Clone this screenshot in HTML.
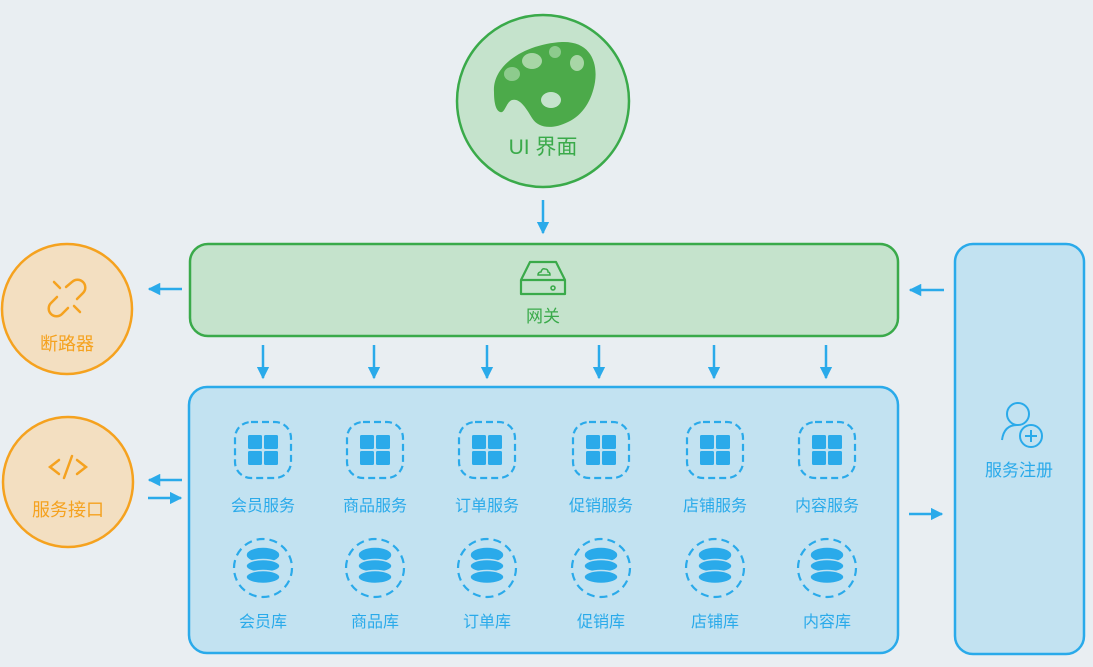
<!DOCTYPE html>
<html><head><meta charset="utf-8"><style>
body{margin:0;width:1093px;height:667px;background:#e9eef2;position:relative;overflow:hidden;font-family:"Liberation Sans","Noto Sans CJK SC",sans-serif}
.a{position:absolute}
.t{position:absolute;text-align:center;white-space:nowrap}
</style></head><body>
<svg class="a" style="left:0;top:0" width="1093" height="667">
<defs>
<marker id="ah" viewBox="0 0 10 10" refX="9" refY="5" markerWidth="5" markerHeight="5" orient="auto"><path d="M0 0L10 5L0 10z" fill="#2aaaea"/></marker>
</defs>
<circle cx="543" cy="101" r="86" fill="#c5e3cc" stroke="#3aaa4a" stroke-width="2.5"/>
<path d="M494 92 C492 65 525 44 562 42 C590 41 598 62 595 82 C592 100 583 115 568 122 C552 130 538 128 532 118 C526 108 520 98 512 100 C506 102 505 114 500 112 C495 110 494 100 494 92Z" fill="#4caa4a"/>
<ellipse cx="512" cy="74" rx="8" ry="7" fill="#8dcb8d"/>
<ellipse cx="532" cy="61" rx="10" ry="8" fill="#a8d6a6"/>
<ellipse cx="555" cy="52" rx="6" ry="6" fill="#8dcb8d"/>
<ellipse cx="577" cy="63" rx="7" ry="8" fill="#a8d6a6"/>
<ellipse cx="551" cy="100" rx="10" ry="8" fill="#c5e3cc"/>
<rect x="190" y="244" width="708" height="92" rx="18" fill="#c5e3cc" stroke="#3aaa4a" stroke-width="2.5"/>
<path d="M521 280 L530 262 L556 262 L565 280 Z M521 280 H565 V294 H521 Z" fill="none" stroke="#3aaa4a" stroke-width="2.2" stroke-linejoin="round"/>
<circle cx="553" cy="288" r="2" fill="none" stroke="#3aaa4a" stroke-width="1.6"/>
<path d="M538 275 q0-3 3-3 q1-4 4-3 q3 0 3 3 q2 0 2 3 z" fill="none" stroke="#3aaa4a" stroke-width="1.5"/>
<rect x="189" y="387" width="709" height="266" rx="18" fill="#c2e2f1" stroke="#2aaaea" stroke-width="2.5"/>
<rect x="955" y="244" width="129" height="410" rx="18" fill="#c2e2f1" stroke="#2aaaea" stroke-width="2.5"/>
<circle cx="1018" cy="414" r="11" fill="none" stroke="#2aaaea" stroke-width="2"/>
<path d="M1002 440 q2-15 15-15" fill="none" stroke="#2aaaea" stroke-width="2"/>
<circle cx="1031" cy="436" r="11" fill="none" stroke="#2aaaea" stroke-width="2"/>
<path d="M1031 430v12M1025 436h12" stroke="#2aaaea" stroke-width="2"/>
<circle cx="67" cy="309" r="65" fill="#f3dfc1" stroke="#f5a21f" stroke-width="2.5"/>
<circle cx="68" cy="482" r="65" fill="#f3dfc1" stroke="#f5a21f" stroke-width="2.5"/>
<g fill="none" stroke="#f5a21f" stroke-width="2.5" stroke-linecap="round">
<path d="M66 287 L72 282 A7 7 0 0 1 83 293 L77 299"/>
<path d="M68 308 L62 314 A7 7 0 0 1 51 303 L57 297"/>
<path d="M54 282 L60 288 M80 312 L74 306"/>
<path d="M59 460 L50 467 L59 474 M77 460 L86 467 L77 474 M72 456 L64 478"/>
</g>
<g stroke="#2aaaea" stroke-width="2.5" marker-end="url(#ah)">
<line x1="543" y1="200" x2="543" y2="233"/>
<line x1="182" y1="289" x2="149" y2="289"/>
<line x1="944" y1="290" x2="910" y2="290"/>
<line x1="182" y1="480" x2="149" y2="480"/>
<line x1="148" y1="498" x2="181" y2="498"/>
<line x1="909" y1="514" x2="942" y2="514"/>
<line x1="263" y1="345" x2="263" y2="378"/>
<line x1="374" y1="345" x2="374" y2="378"/>
<line x1="487" y1="345" x2="487" y2="378"/>
<line x1="599" y1="345" x2="599" y2="378"/>
<line x1="714" y1="345" x2="714" y2="378"/>
<line x1="826" y1="345" x2="826" y2="378"/>
</g>
<g id="icons"></g>
</svg>
<div class="t" style="left:443px;top:131px;width:200px;font-size:21px;color:#3aaa4a">UI 界面</div>
<div class="t" style="left:493px;top:302px;width:100px;font-size:17px;color:#3aaa4a">网关</div>
<div class="t" style="left:17px;top:330px;width:100px;font-size:18px;color:#f5a21f">断路器</div>
<div class="t" style="left:8px;top:496px;width:120px;font-size:18px;color:#f5a21f">服务接口</div>
<div class="t" style="left:969px;top:456px;width:100px;font-size:17px;color:#2aaaea">服务注册</div>
<script>
var xs=[263,375,487,601,715,827],n1=["会员服务","商品服务","订单服务","促销服务","店铺服务","内容服务"],n2=["会员库","商品库","订单库","促销库","店铺库","内容库"];
var g=document.getElementById("icons"),s="";
xs.forEach(function(x,i){
s+='<rect x="'+(x-28)+'" y="422" width="56" height="56" rx="16" fill="none" stroke="#2aaaea" stroke-width="2.2" stroke-dasharray="7 4"/>';
[[-15,-15],[1,-15],[-15,1],[1,1]].forEach(function(p){s+='<rect x="'+(x+p[0])+'" y="'+(450+p[1])+'" width="14" height="14" rx="1.5" fill="#2aaaea"/>';});
s+='<circle cx="'+x+'" cy="568" r="29" fill="none" stroke="#2aaaea" stroke-width="2.2" stroke-dasharray="8 5"/>';
[555,566,577].forEach(function(y,k){s+='<ellipse cx="'+x+'" cy="'+y+'" rx="17" ry="'+(k==0?8:6.5)+'" fill="#2aaaea" stroke="#c2e2f1" stroke-width="1.5"/>';});
var d=document.createElement("div");d.className="t";d.style.cssText="left:"+(x-60)+"px;top:492px;width:120px;font-size:16px;color:#2aaaea";d.textContent=n1[i];document.body.appendChild(d);
var e=document.createElement("div");e.className="t";e.style.cssText="left:"+(x-60)+"px;top:608px;width:120px;font-size:16px;color:#2aaaea";e.textContent=n2[i];document.body.appendChild(e);
});
g.innerHTML=s;
</script>
</body></html>
